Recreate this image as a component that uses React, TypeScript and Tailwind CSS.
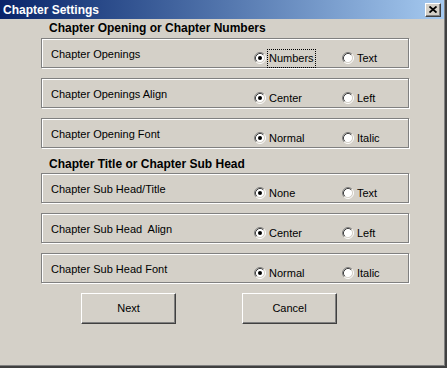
import React from "react";

type Row = {
  label: string;
  options: [string, string];
  focused?: boolean;
};

const openingRows: Row[] = [
  { label: "Chapter Openings", options: ["Numbers", "Text"], focused: true },
  { label: "Chapter Openings Align", options: ["Center", "Left"] },
  { label: "Chapter Opening Font", options: ["Normal", "Italic"] },
];

const subHeadRows: Row[] = [
  { label: "Chapter Sub Head/Title", options: ["None", "Text"] },
  { label: "Chapter Sub Head  Align", options: ["Center", "Left"] },
  { label: "Chapter Sub Head Font", options: ["Normal", "Italic"] },
];

function RadioDot({ checked }: { checked: boolean }) {
  return (
    <svg width="12" height="12" viewBox="0 0 12 12" className="shrink-0">
      <circle cx="6" cy="6" r="4.5" fill="#fff" />
      <path d="M2.11 9.89 A5.5 5.5 0 0 1 9.89 2.11" fill="none" stroke="#808080" strokeWidth="1" />
      <path d="M9.89 2.11 A5.5 5.5 0 0 1 2.11 9.89" fill="none" stroke="#fff" strokeWidth="1" />
      <path d="M2.82 9.18 A4.5 4.5 0 0 1 9.18 2.82" fill="none" stroke="#404040" strokeWidth="1" />
      <path d="M9.18 2.82 A4.5 4.5 0 0 1 2.82 9.18" fill="none" stroke="#d4d0c8" strokeWidth="1" />
      {checked ? <circle cx="6" cy="6" r="2" fill="#000" /> : null}
    </svg>
  );
}

function SettingFrame({ row }: { row: Row }) {
  return (
    <div className="flex h-[30px] w-[368px] items-center border border-[#808080] pl-[9px] shadow-[inset_1px_1px_0_#fff,1px_1px_0_#fff]">
      <span className="mt-[3px] w-[203px] shrink-0 whitespace-pre text-[11px] leading-[13px]">{row.label}</span>
      <div className="mt-[10px] flex">
        {row.options.map((option, index) => (
          <div key={option} className={`flex shrink-0 items-center ${index === 0 ? "w-[88px]" : ""}`}>
            <RadioDot checked={index === 0} />
            <span
              className={`ml-[1px] border px-[1px] py-[2px] text-[11px] leading-[13px] ${
                row.focused && index === 0 ? "border-dotted border-black" : "border-transparent"
              }`}
            >
              {option}
            </span>
          </div>
        ))}
      </div>
    </div>
  );
}

function ClassicButton({ children }: { children: React.ReactNode }) {
  return (
    <button
      type="button"
      className="flex h-[31px] w-[95px] items-center justify-center border-t border-l border-r border-b border-t-white border-l-white border-r-[#404040] border-b-[#404040] bg-[#d4d0c8] text-[11px] shadow-[inset_-1px_-1px_0_#808080]"
    >
      {children}
    </button>
  );
}

export default function App() {
  return (
    <div className="h-[368px] w-[447px] border-r-2 border-b-2 border-[#404040] bg-[#d4d0c8] font-['Liberation_Sans',Arial,sans-serif] text-black">
      <div className="flex h-full flex-col border-r border-b border-[#808080]">
        <div className="flex h-[19px] items-center justify-between bg-linear-to-r from-[#0a246a] to-[#a6caf0] pl-[3px] pr-[3px]">
          <span className="text-[12px] font-bold leading-[14px] text-white">Chapter Settings</span>
          <div className="flex h-[14px] w-[16px] items-center justify-center border-t border-l border-r border-b border-t-white border-l-white border-r-[#404040] border-b-[#404040] bg-[#d4d0c8] shadow-[inset_-1px_-1px_0_#808080]">
            <svg width="8" height="7" viewBox="0 0 8 7">
              <path d="M0.5 0.5 L7.5 6.5 M7.5 0.5 L0.5 6.5" stroke="#000" strokeWidth="1.8" />
            </svg>
          </div>
        </div>

        <div className="flex flex-col pl-[41px]">
          <h2 className="mt-[2px] ml-[8px] h-[14px] text-[12px] font-bold leading-[14px]">
            Chapter Opening or Chapter Numbers
          </h2>
          <div className="mt-[3px] flex flex-col gap-[10px]">
            {openingRows.map((row) => (
              <SettingFrame key={row.label} row={row} />
            ))}
          </div>

          <h2 className="mt-[9px] ml-[8px] h-[14px] text-[12px] font-bold leading-[14px]">
            Chapter Title or Chapter Sub Head
          </h2>
          <div className="mt-[2px] flex flex-col gap-[10px]">
            {subHeadRows.map((row) => (
              <SettingFrame key={row.label} row={row} />
            ))}
          </div>

          <div className="mt-[10px] ml-[40px] flex gap-[66px]">
            <ClassicButton>Next</ClassicButton>
            <ClassicButton>Cancel</ClassicButton>
          </div>
        </div>
      </div>
    </div>
  );
}
